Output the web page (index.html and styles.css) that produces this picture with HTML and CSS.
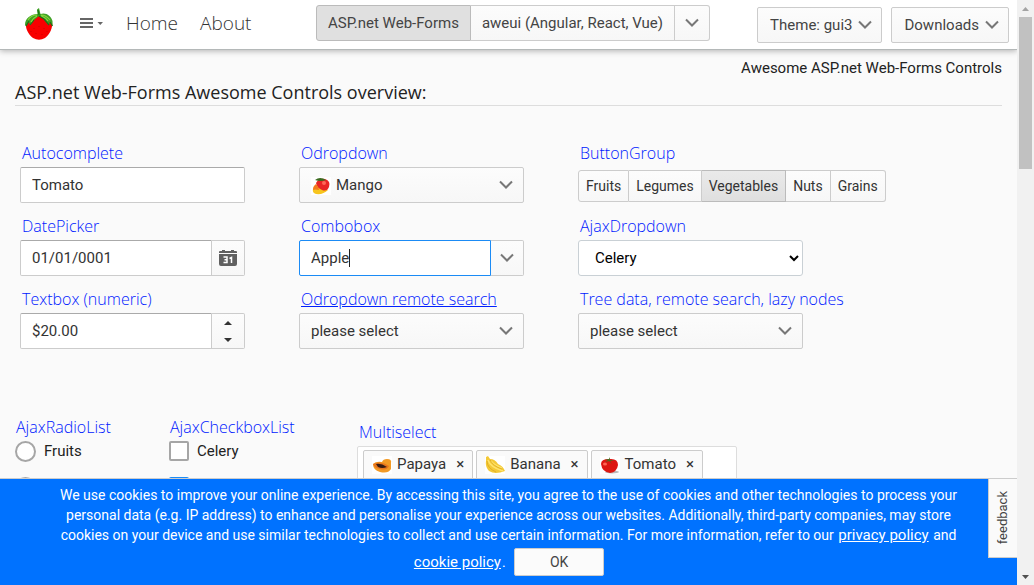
FILE: index.html
```
<!DOCTYPE html>
<html lang="en">
<head>
<meta charset="utf-8">
<meta name="viewport" content="width=device-width, initial-scale=1">
<title>Awesome ASP.net Web-Forms Controls</title>
<link rel="stylesheet" href="styles.css">
</head>
<body>
<svg class="defs" aria-hidden="true">
  <symbol id="chevron" viewBox="0 0 14 10"><path d="M1 1.500 7 7.500 13 1.500" fill="none" stroke="#777" stroke-width="2"/></symbol>
</svg>
<div class="window">
  <div class="viewport">
    <header class="topbar">
      <a class="logo" href="#" aria-label="Awesome home">
        <svg width="30" height="34" viewBox="0 0 30 34">
          <path d="M2 14C1 20 4 26 9 30Q15 33.500 21 30C26 26 29 20 28 13.500Q22 6 15 8Q6 7 2 14Z" fill="#f80000"/>
          <path d="M13 1.500 15 0 16.500 6C22 4 27 8 28.500 13L28.500 18 26 14 25 17 20 11 15 8 10 12 6 17 5 14 2 18 1 17C1 10 7 6 13.500 6Z" fill="#3fa026"/>
          <path d="M14 2 15 7M10 12 6 17M15 8 20 11 25 17M28.500 18 26 14M2 18 5 13" fill="none" stroke="#187418" stroke-width="1.200"/>
          <path d="M13 7Q7 7 4 12M13 8Q9 10 7 14M17 7Q22 7 26 12M17 7.500Q22 10 24 13" fill="none" stroke="#88d83d" stroke-width="1.200"/>
          <path d="M10 20v1M15 18v1M20 20v1M12 25v1M18 26v1M7 23v1M23 23v1" stroke="#d00000"/>
        </svg>
      </a>
      <button class="menu" type="button" aria-label="Menu">
        <svg width="24" height="12" viewBox="0 0 24 12"><path d="M0 2h13M0 6h13M0 10h13" stroke="#666" stroke-width="2"/><path d="M17.500 5h5.500l-2.750 3z" fill="#666"/></svg>
      </button>
      <nav class="nav"><a href="#">Home</a><a href="#">About</a></nav>
      <div class="group versions">
        <button type="button" class="on">ASP.net Web-Forms</button>
        <button type="button">aweui (Angular, React, Vue)</button>
        <button type="button" class="more" aria-label="More versions"><svg class="chev"><use href="#chevron"/></svg></button>
      </div>
      <div class="actions">
        <button type="button">Theme: gui3 <svg class="chev"><use href="#chevron"/></svg></button>
        <button type="button">Downloads <svg class="chev"><use href="#chevron"/></svg></button>
      </div>
    </header>

    <main class="content">
      <p class="tagline">Awesome ASP.net Web-Forms Controls</p>
      <h1>ASP.net Web-Forms Awesome Controls overview:</h1>

      <div class="fields">
        <div class="field">
          <label for="auto">Autocomplete</label>
          <input id="auto" class="text" type="text" value="Tomato">
        </div>
        <div class="field">
          <label for="odrop">Odropdown</label>
          <button id="odrop" class="drop" type="button">
            <svg class="fruit" viewBox="0 0 20 18"><rect width="20" height="18" fill="#fff"/><path d="M2 12Q3 7 9 8L17 13Q12 18 5 17 1 16 2 12Z" fill="#f7c51e"/><path d="M5 6Q8 1 14 2 20 4 18 10 16 15 11 13 6 11 5 6Z" fill="#e82525"/><path d="M5 7Q8 10 8 13Q4 12 2 13Q2 9 5 7Z" fill="#f27a1f"/><path d="M4 3Q9-1 15 3 10 5 4 3Z" fill="#3b6b20"/><circle cx="13" cy="6" r="2" fill="#ff6658"/></svg>
            <span>Mango</span><svg class="chev"><use href="#chevron"/></svg>
          </button>
        </div>
        <div class="field">
          <span class="label" id="bg">ButtonGroup</span>
          <div class="group small" role="group" aria-labelledby="bg">
            <button type="button">Fruits</button><button type="button">Legumes</button><button type="button" class="on">Vegetables</button><button type="button">Nuts</button><button type="button">Grains</button>
          </div>
        </div>
        <div class="field">
          <label for="date">DatePicker</label>
          <div class="combo">
            <input id="date" class="text" type="text" value="01/01/0001">
            <button type="button" class="side" aria-label="Open calendar">
              <svg width="18" height="16" viewBox="0 0 18 16"><path d="M0 2q0-1 1-1h2V0h3v1h6V0h3v1h2q1 0 1 1v1H0zM0 4h18v10q0 2-2 2H2q-2 0-2-2z" fill="#606060"/><path d="M4.500 7h3.500v5.500H4.500M5.500 9.750H8M10.500 8.500l2-1v5.500" fill="none" stroke="#fff" stroke-width="1.500"/></svg>
            </button>
          </div>
        </div>
        <div class="field">
          <label for="combo">Combobox</label>
          <div class="combo">
            <input id="combo" class="text focused" type="text" value="Apple" autofocus>
            <button type="button" class="side" aria-label="Open list"><svg class="chev"><use href="#chevron"/></svg></button>
          </div>
        </div>
        <div class="field">
          <label for="ajax">AjaxDropdown</label>
          <select id="ajax" class="native"><option>Celery</option></select>
        </div>
        <div class="field">
          <label for="num">Textbox (numeric)</label>
          <div class="combo">
            <input id="num" class="text" type="text" value="$20.00">
            <div class="side spin">
              <button type="button" aria-label="Increase"><svg width="8" height="4" viewBox="0 0 8 4"><path d="M0 4 4 0 8 4z" fill="#333"/></svg></button>
              <button type="button" aria-label="Decrease"><svg width="8" height="4" viewBox="0 0 8 4"><path d="M0 0 4 4 8 0z" fill="#333"/></svg></button>
            </div>
          </div>
        </div>
        <div class="field">
          <a class="label underlined" href="#">Odropdown remote search</a>
          <button class="drop" type="button"><span>please select</span><svg class="chev"><use href="#chevron"/></svg></button>
        </div>
        <div class="field">
          <label for="tree">Tree data, remote search, lazy nodes</label>
          <button id="tree" class="drop" type="button"><span>please select</span><svg class="chev"><use href="#chevron"/></svg></button>
        </div>
      </div>

      <div class="lists">
        <fieldset class="options radios">
          <legend>AjaxRadioList</legend>
          <label><input type="radio" name="kind">Fruits</label>
          <label><input type="radio" name="kind" aria-label="Second category"></label>
        </fieldset>
        <fieldset class="options checks">
          <legend>AjaxCheckboxList</legend>
          <label><input type="checkbox">Celery</label>
          <label><input type="checkbox" aria-label="Second item" checked></label>
        </fieldset>
        <div class="multi">
          <span class="label" id="ms">Multiselect</span>
          <div class="chips" role="group" aria-labelledby="ms">
            <span class="chip"><svg class="fruit" viewBox="0 0 20 18"><rect width="20" height="18" fill="#fff"/><path d="M1 8Q4 5 10 6 11 3 15 3 20 3 19 7L19 13Q16 18 8 16 1 14 1 8Z" fill="#f39a24"/><path d="M1 8Q9 4 17 10 15 15 8 13 2 12 1 8Z" fill="#e8761c"/><path d="M4 8Q9 7 15 11 10 13 6 11Z" fill="#3a1c13"/></svg>Papaya<button type="button" aria-label="Remove Papaya">×</button></span>
            <span class="chip"><svg class="fruit" viewBox="0 0 20 18"><rect width="20" height="18" fill="#fff"/><path d="M1 1 3 0 5 3Q10 3 13 8 18 10 20 15 10 19 4 15 0 11 1 5Z" fill="#f4c936"/><path d="M3 4Q5 11 18 15M6 5Q10 10 17 12" fill="none" stroke="#ffe36b" stroke-width="1.500"/><path d="M2 5Q2 12 11 16M5 4Q8 10 17 13" fill="none" stroke="#d9a51c" stroke-width=".7"/></svg>Banana<button type="button" aria-label="Remove Banana">×</button></span>
            <span class="chip"><svg class="fruit" viewBox="0 0 20 18"><rect width="20" height="18" fill="#fff"/><ellipse cx="12" cy="16" rx="7" ry="1.500" fill="#bbb"/><path d="M1 8Q1 3 9 3 18 2 18 9 17 16 10 17 2 16 1 8Z" fill="#dd1712"/><path d="M10 1 10 4 15 4 10 5 12 8 9 5 5 6 8 4 5 3 9 3Z" fill="#4c6b22"/><ellipse cx="5" cy="8" rx="2" ry="1.500" fill="#ff6553"/></svg>Tomato<button type="button" aria-label="Remove Tomato">×</button></span>
          </div>
        </div>
      </div>
    </main>

    <section class="cookies" aria-label="Cookie notice">
      <p>We use cookies to improve your online experience. By accessing this site, you agree to the use of cookies and other technologies to process your personal data (e.g. IP address) to enhance and personalise your experience across our websites. Additionally, third-party companies, may store cookies on your device and use similar technologies to collect and use certain information. For more information, refer to our <a href="#">privacy policy</a> and <a href="#">cookie policy</a>. <button type="button">OK</button></p>
    </section>
    <button class="feedback" type="button"><span>feedback</span></button>
  </div>
  <div class="scrollbar" aria-hidden="true">
    <svg width="17" height="17" viewBox="0 0 17 17"><path d="M5 11 8.500 7 12 11z" fill="#a3a3a3"/></svg>
    <div class="thumb"></div>
    <svg width="17" height="17" viewBox="0 0 17 17"><path d="M5 7 8.500 11 12 7z" fill="#505050"/></svg>
  </div>
</div>
</body>
</html>
```
FILE: styles.css
```
* { box-sizing: border-box; }
body { margin: 0; font: 15px/20px Roboto, sans-serif; color: #222; background: #fafafa; }
button, input, select { font: inherit; color: inherit; margin: 0; }
svg { display: block; flex: none; }
.defs { display: none; }
.window { display: flex; height: 100vh; overflow: hidden; }
.viewport { flex: 1; min-width: 0; position: relative; overflow: hidden; }

.topbar { display: flex; align-items: flex-start; padding: 5px 8px 0 24px; height: 50px; background: #fff; border-bottom: 1px solid #b4b8b8; box-shadow: 0 1px 6px rgba(0, 0, 0, .3); position: relative; }
.logo { margin: 3px 24px 0 0; }
.menu { border: 0; background: none; padding: 0; margin: 12px 22px 0 2px; }
.nav { display: flex; gap: 22px; width: 126px; font: 300 19px/36px "Open Sans", sans-serif; }
.nav a { color: #333; text-decoration: none; }
.group { display: inline-flex; }
.group button, .actions button, .drop, .side { border: 1px solid #ccc; background: linear-gradient(#fcfcfc, #f7f7f7); color: #444; }
.group button { height: 36px; padding: 0 11px; border-left-width: 0; white-space: nowrap; }
.group button:first-child { border-left-width: 1px; border-radius: 3px 0 0 3px; }
.group button:last-child { border-radius: 0 3px 3px 0; }
.group .on { background: #e0e0e0; border-color: #bbb; }
.versions { margin-left: 64px; }
.group .more { padding: 0 10px; }
.chev { width: 14px; height: 10px; }
.actions { display: flex; gap: 9px; margin: 2px 0 0 auto; }
.actions button { display: flex; align-items: center; gap: 6px; height: 36px; padding: 0 9px 0 12px; border-radius: 2px; white-space: nowrap; }

.content { padding: 8px 15px 0; }
.tagline { margin: 0; text-align: right; }
h1 { margin: 2px 0 0; padding-bottom: 1px; border-bottom: 1px solid #ddd; font: 18px/24px "Open Sans", sans-serif; }
.fields { display: grid; grid-template-columns: repeat(auto-fill, 225px); gap: 11px 54px; padding: 35px 5px 0; }
.field { display: flex; flex-direction: column; align-items: flex-start; gap: 2px; }
.field > label, .label, legend { display: block; padding: 0 2px; font: 300 16px/24px "Open Sans", sans-serif; color: #0020ff; white-space: nowrap; text-decoration: none; }
.label.underlined { padding: 0; margin: 0 2px; text-decoration: underline; }
.text { width: 100%; min-width: 0; height: 36px; padding: 0 11px; border: 1px solid #ccc; border-top-color: #aaa; border-radius: 2px; background: #fff; color: #333; outline: 0; }
.drop { display: flex; align-items: center; width: 100%; height: 36px; padding: 0 10px 0 11px; border-radius: 2px; color: #333; text-align: left; }
.drop .chev { margin-left: auto; }
.fruit { width: 20px; height: 18px; margin: 2px 5px 0 0; }
.combo { display: flex; width: 100%; }
.combo .text { flex: 1; border-radius: 2px 0 0 2px; }
.text.focused { border-color: #1b8bf5; caret-color: transparent; background: linear-gradient(#222, #222) 49px 8px / 1px 18px no-repeat #fff; }
.side { display: flex; align-items: center; justify-content: center; width: 33px; height: 36px; padding: 0; border-left: 0; border-radius: 0 2px 2px 0; }
.side.spin { flex-direction: column; gap: 5px; }
.spin button { display: flex; padding: 4px 8px; border: 0; background: none; }
.group.small { margin: 3px 0 1px; font-size: 14px; }
.small button { height: 32px; padding: 0 7px; color: #333; }
.small .on { background: linear-gradient(#eaeaea, #dfdfdf); }
.native { width: 100%; height: 36px; padding: 0 0 0 12px; border: 1px solid #c9d0d5; border-radius: 3px; background: #fff; color: #000; }

.lists { display: flex; align-items: flex-start; padding-top: 66px; }
.options { margin: 0; border: 0; padding: 0; min-width: 0; }
.options legend { padding: 0 1px; }
.options label { display: flex; align-items: center; gap: 8px; height: 36px; margin-top: -6px; margin-bottom: 6px; }
.options input { appearance: none; width: 21px; height: 21px; border: 2px solid #a6a6a6; background: #fff; }
.radios { width: 154px; }
.radios input { border-radius: 50%; }
.checks { width: 188px; }
.checks input { width: 20px; height: 20px; border-radius: 2px; }
.checks input:checked { background: #1b8bf5; border-color: #1b8bf5; }
.multi { margin-top: 5px; flex: 0 1 380px; }
.chips { display: flex; gap: 3px; height: 38px; margin-top: 2px; padding: 3px 5px; border: 1px solid #ddd; border-radius: 2px; background: #fff; }
.chip { display: flex; align-items: center; height: 30px; padding: 0 8px 2px 8px; border: 1px solid #ccc; border-radius: 2px; background: #fafafa; color: #333; }
.chip button { border: 0; background: none; padding: 0; margin-left: 10px; }

.cookies { position: absolute; left: 0; right: 0; bottom: 0; padding: 6px 55px 9px; border-top: 1px solid #ccc; background: #0072ff; color: #fff; text-align: center; font-size: 14px; }
.cookies p { margin: 0; }
.cookies a { color: #fff; font-size: 15px; margin: 0 1px; }
.cookies button { width: 90px; height: 28px; margin: 3px 0 0 5px; padding: 0; border: 1px solid #ccc; border-radius: 2px; background: #fbfbfb; color: #444; }
.feedback { position: absolute; right: 0; bottom: 27px; width: 29px; height: 80px; padding: 0; border: 1px solid #ccc; border-right: 0; background: #fafafa; color: #444; font-size: 13px; display: flex; align-items: center; justify-content: center; }
.feedback span { writing-mode: vertical-rl; transform: rotate(180deg); }

.scrollbar { width: 17px; display: flex; flex-direction: column; background: #f1f1f1; }
.thumb { height: 26%; margin: 0 2px auto; background: #c1c1c1; }
```
